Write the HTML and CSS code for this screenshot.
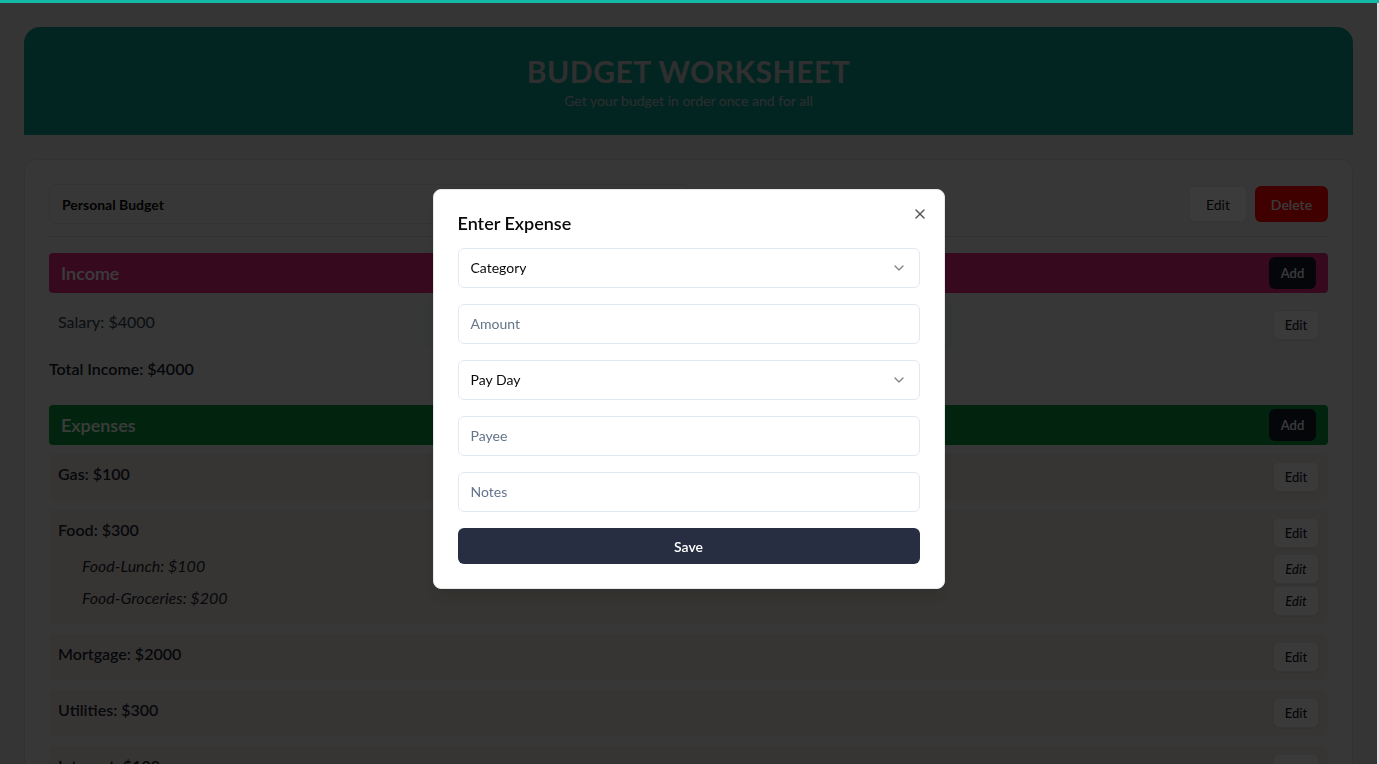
FILE: index.html
```html
<!DOCTYPE html>
<html lang="en">
<head>
<meta charset="utf-8">
<title>Budget Worksheet</title>
<link rel="stylesheet" href="styles.css">
</head>
<body>
<div class="topbar"></div>
<div class="page">
  <header class="hero">
    <h1 class="hero-title">BUDGET WORKSHEET</h1>
    <p class="hero-sub">Get your budget in order once and for all</p>
  </header>

  <section class="card">
    <div class="budget-row">
      <div class="budget-name">Personal Budget</div>
      <div class="budget-actions">
        <button class="btn btn-outline">Edit</button>
        <button class="btn btn-danger">Delete</button>
      </div>
    </div>

    <div class="section-bar bar-income">
      <span class="bar-title">Income</span>
      <button class="btn-add">Add</button>
    </div>
    <div class="item item-income">
      <div class="line">
        <span class="item-text">Salary: $4000</span>
        <button class="btn-edit">Edit</button>
      </div>
    </div>
    <div class="total">Total Income: $4000</div>

    <div class="section-bar bar-expense">
      <span class="bar-title">Expenses</span>
      <button class="btn-add">Add</button>
    </div>
    <div class="item item-expense">
      <div class="line">
        <span class="item-text strong">Gas: $100</span>
        <button class="btn-edit">Edit</button>
      </div>
    </div>
    <div class="item item-expense">
      <div class="line">
        <span class="item-text strong">Food: $300</span>
        <button class="btn-edit">Edit</button>
      </div>
      <div class="sublist">
        <div class="line sub">
          <span class="item-text">Food-Lunch: $100</span>
          <button class="btn-edit">Edit</button>
        </div>
        <div class="line sub">
          <span class="item-text">Food-Groceries: $200</span>
          <button class="btn-edit">Edit</button>
        </div>
      </div>
    </div>
    <div class="item item-expense">
      <div class="line">
        <span class="item-text strong">Mortgage: $2000</span>
        <button class="btn-edit">Edit</button>
      </div>
    </div>
    <div class="item item-expense">
      <div class="line">
        <span class="item-text strong">Utilities: $300</span>
        <button class="btn-edit">Edit</button>
      </div>
    </div>
    <div class="item item-expense">
      <div class="line">
        <span class="item-text strong">Internet: $120</span>
        <button class="btn-edit">Edit</button>
      </div>
    </div>
  </section>
</div>

<div class="overlay">
  <div class="modal" role="dialog">
    <button class="modal-close" aria-label="Close">
      <svg width="16" height="16" viewBox="0 0 24 24" fill="none" stroke="currentColor" stroke-width="2" stroke-linecap="round" stroke-linejoin="round"><path d="M18 6 6 18"/><path d="m6 6 12 12"/></svg>
    </button>
    <h2 class="modal-title">Enter Expense</h2>
    <div class="field select">
      <span class="value">Category</span>
      <svg class="chev" width="16" height="16" viewBox="0 0 24 24" fill="none" stroke="currentColor" stroke-width="2" stroke-linecap="round" stroke-linejoin="round"><path d="m6 9 6 6 6-6"/></svg>
    </div>
    <div class="field"><span class="placeholder">Amount</span></div>
    <div class="field select">
      <span class="value">Pay Day</span>
      <svg class="chev" width="16" height="16" viewBox="0 0 24 24" fill="none" stroke="currentColor" stroke-width="2" stroke-linecap="round" stroke-linejoin="round"><path d="m6 9 6 6 6-6"/></svg>
    </div>
    <div class="field"><span class="placeholder">Payee</span></div>
    <div class="field"><span class="placeholder">Notes</span></div>
    <button class="btn-save">Save</button>
  </div>
</div>
</body>
</html>
```
FILE: styles.css
```css
* { box-sizing: border-box; }

html, body {
  margin: 0;
  padding: 0;
  overflow: hidden;
  background: #d8e2e2;
}

body {
  font-family: "Segoe UI", Lato, "Open Sans", sans-serif;
  color: #1f2937;
}

button {
  font-family: inherit;
  cursor: pointer;
}

.topbar {
  position: relative;
  z-index: 60;
  height: 3px;
  background: #14b8a6;
}

.page {
  margin-right: 2px;
  padding: 24px 24px 40px;
  background: #d2d2d2;
  min-height: 761px;
}

/* header */
.hero {
  background: #0d9488;
  border-radius: 16px 16px 0 0;
  padding: 26px 16px 24px;
  text-align: center;
}

.hero-title {
  margin: 0;
  font-size: 30px;
  line-height: 36px;
  font-weight: 700;
  letter-spacing: 0.5px;
  color: #bcbcbc;
}

.hero-sub {
  margin: 2px 0 0;
  font-size: 14px;
  line-height: 20px;
  color: #b4b4b4;
}

/* card */
.card {
  margin-top: 24px;
  background: #dcdcdc;
  border: 1px solid #c8c8c8;
  border-radius: 12px;
  padding: 24px;
}

.budget-row {
  display: flex;
  align-items: center;
  justify-content: space-between;
  padding-bottom: 12px;
  border-bottom: 1px solid #c4c4c4;
}

.budget-name {
  width: 50%;
  height: 40px;
  display: flex;
  align-items: center;
  padding: 0 12px;
  border: 1px solid #cbcbcb;
  border-radius: 6px;
  font-size: 14px;
  font-weight: 700;
  color: #0a0a0a;
}

.budget-actions {
  display: flex;
  gap: 8px;
}

.btn {
  height: 36px;
  border-radius: 6px;
  font-size: 14px;
  padding: 0 16px;
}

.btn-outline {
  width: 58px;
  padding: 0;
  background: #ececec;
  border: 1px solid #d6d6d6;
  color: #111;
  box-shadow: 0 1px 2px rgba(0, 0, 0, 0.06);
}

.btn-danger {
  width: 73px;
  padding: 0;
  background: #ff0000;
  border: none;
  color: #e6e6e6;
  font-weight: 600;
}

/* section bars */
.section-bar {
  height: 40px;
  display: flex;
  align-items: center;
  justify-content: space-between;
  padding: 0 12px;
  border-radius: 4px;
}

.bar-income {
  margin-top: 16px;
  background: #d9267c;
}

.bar-expense {
  margin-top: 24px;
  background: #0a8f3c;
}

.bar-title {
  font-size: 18px;
  font-weight: 600;
  color: #ececec;
}

.btn-add {
  width: 47px;
  height: 32px;
  border: none;
  border-radius: 6px;
  background: #151a26;
  color: #e6e6e6;
  font-size: 13px;
  font-weight: 600;
}

/* items */
.item {
  margin-top: 8px;
  border: 1px solid transparent;
  border-radius: 6px;
  padding: 8px;
}

.item-income {
  background: #d6dbd8;
  border-color: #d8dcda;
}

.item-expense {
  background: #d8d3ca;
  border-color: #d9d5cd;
}

.line {
  display: flex;
  align-items: flex-start;
  justify-content: space-between;
}

.item-text {
  font-size: 16px;
  line-height: 24px;
  color: #2f3a4a;
}

.item-expense .item-text {
  color: #1a2230;
}

.item-text.strong {
  font-weight: 600;
}

.sublist {
  margin-top: 6px;
  display: flex;
  flex-direction: column;
  gap: 2px;
}

.line.sub {
  padding-left: 24px;
  font-style: italic;
}

.line.sub .item-text {
  font-weight: 400;
}

.btn-edit {
  width: 46px;
  height: 30px;
  background: #e8e8e8;
  border: 1px solid #d4d4d4;
  border-radius: 6px;
  box-shadow: 0 1px 2px rgba(0, 0, 0, 0.08);
  font-size: 13px;
  font-weight: 500;
  font-style: inherit;
  color: #111827;
}

.total {
  margin-top: 8px;
  font-size: 16px;
  line-height: 24px;
  font-weight: 600;
  color: #111827;
}

/* modal */
.overlay {
  position: fixed;
  top: 3px;
  left: 0;
  right: 2px;
  bottom: 0;
  z-index: 50;
  background: rgba(0, 0, 0, 0.75);
  display: flex;
  align-items: center;
  justify-content: center;
  padding-top: 11px;
}

.modal {
  position: relative;
  width: 512px;
  background: #ffffff;
  border: 1px solid #e5e7eb;
  border-radius: 8px;
  padding: 24px;
  display: flex;
  flex-direction: column;
  gap: 16px;
  box-shadow: 0 10px 15px rgba(0, 0, 0, 0.1);
}

.modal-close {
  position: absolute;
  top: 16px;
  right: 16px;
  width: 16px;
  height: 16px;
  padding: 0;
  border: none;
  background: none;
  color: #0a0a0a;
  opacity: 0.7;
  display: flex;
}

.modal-title {
  margin: 0;
  font-size: 18px;
  line-height: 18px;
  font-weight: 600;
  color: #0a0a0a;
}

.field {
  height: 40px;
  border: 1px solid #e2e8f0;
  border-radius: 6px;
  padding: 0 12px;
  display: flex;
  align-items: center;
  justify-content: space-between;
  font-size: 14px;
  line-height: 20px;
}

.value {
  color: #0a0a0a;
  margin-top: -1px;
}

.placeholder {
  color: #64748b;
  margin-top: -1px;
}

.chev {
  color: #0a0a0a;
  opacity: 0.5;
}

.btn-save {
  height: 36px;
  border: none;
  border-radius: 6px;
  background: #272e42;
  color: #ffffff;
  font-size: 14px;
  font-weight: 600;
}
```
